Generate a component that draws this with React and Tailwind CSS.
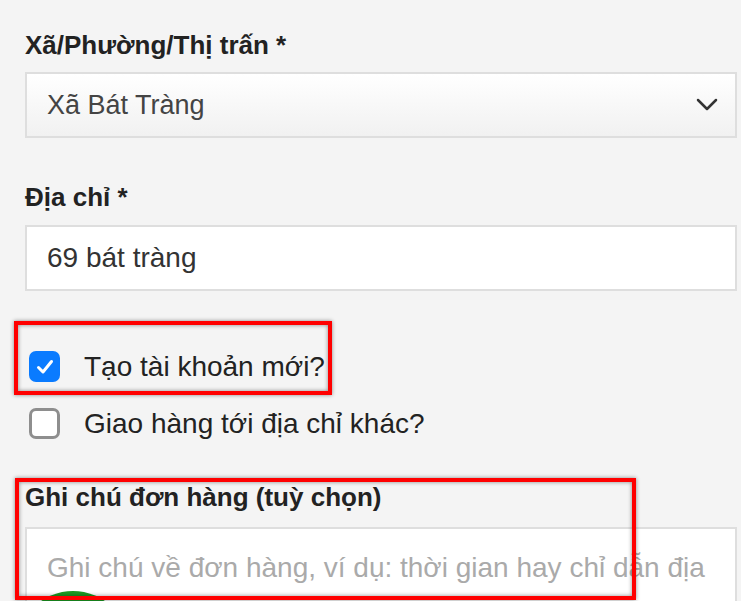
import React from "react";

function Label({ children }) {
  return (
    <div className="text-[26px] leading-[30px] font-bold text-[#222]">{children}</div>
  );
}

function Checkbox({ checked, children }) {
  return (
    <div className="h-[31px] flex items-center gap-[24px] pl-[4px]">
      {checked ? (
        <div className="w-[31px] h-[31px] rounded-[7px] bg-[#0a7bff] flex items-center justify-center shrink-0">
          <svg width="20" height="20" viewBox="0 0 20 20" fill="none">
            <polyline points="3.5,10.5 8,15 16.5,4.5" stroke="white" strokeWidth="3" strokeLinecap="round" strokeLinejoin="round" />
          </svg>
        </div>
      ) : (
        <div className="w-[31px] h-[31px] rounded-[7px] border-[3px] border-[#8e8e8e] bg-white shrink-0" />
      )}
      <span className="text-[28px] leading-[31px] text-[#222]">{children}</span>
    </div>
  );
}

export default function App() {
  return (
    <div className="w-[741px] h-[601px] overflow-hidden bg-[#f4f4f4] pl-[25px] pr-[4px] pt-[30px] relative [font-family:'Liberation_Sans',Arial,sans-serif]">
      <Label>Xã/Phường/Thị trấn *</Label>
      <div className="mt-[12px] h-[66px] border-2 border-[#dedede] bg-linear-to-b from-white to-[#f1f1f1] flex items-center justify-between pl-[20px] pr-[16px]">
        <span className="text-[27px] text-[#444]">Xã Bát Tràng</span>
        <svg width="24" height="14" viewBox="0 0 24 14" fill="none">
          <polyline points="3,2 12,11 21,2" stroke="#333" strokeWidth="2.5" strokeLinecap="round" strokeLinejoin="round" />
        </svg>
      </div>

      <div className="mt-[44px]">
        <Label>Địa chỉ *</Label>
      </div>
      <div className="mt-[13px] h-[66px] border-2 border-[#dedede] bg-white flex items-center pl-[20px]">
        <span className="text-[28px] text-[#333]">69 bát tràng</span>
      </div>

      <div className="mt-[60px] relative">
        <div className="absolute left-[-11px] top-[-30px] w-[318px] h-[74px] border-[4px] border-[#ff0000] shadow-[0_0_4px_rgba(0,0,0,0.45),inset_0_0_4px_rgba(0,0,0,0.45)]" />
        <Checkbox checked>Tạo tài khoản mới?</Checkbox>
      </div>
      <div className="mt-[26px]">
        <Checkbox>Giao hàng tới địa chỉ khác?</Checkbox>
      </div>

      <div className="mt-[43px] relative">
        <div className="absolute left-[-10px] top-[-4px] w-[621px] h-[122px] border-[4px] border-[#ff0000] shadow-[0_0_4px_rgba(0,0,0,0.45),inset_0_0_4px_rgba(0,0,0,0.45)] z-20" />
        <Label>Ghi chú đơn hàng (tuỳ chọn)</Label>
        <div className="mt-[15px] h-[120px] border-2 border-[#dedede] bg-white pl-[20px] pt-[23px]">
          <span className="text-[28px] leading-[32px] text-[#aaa]">
            Ghi chú về đơn hàng, ví dụ: thời gian hay chỉ dẫn địa
          </span>
        </div>
      </div>

      <div className="absolute left-[17px] top-[591px] w-[112px] h-[112px] rounded-full bg-[#1c9a22] z-10" />
    </div>
  );
}
